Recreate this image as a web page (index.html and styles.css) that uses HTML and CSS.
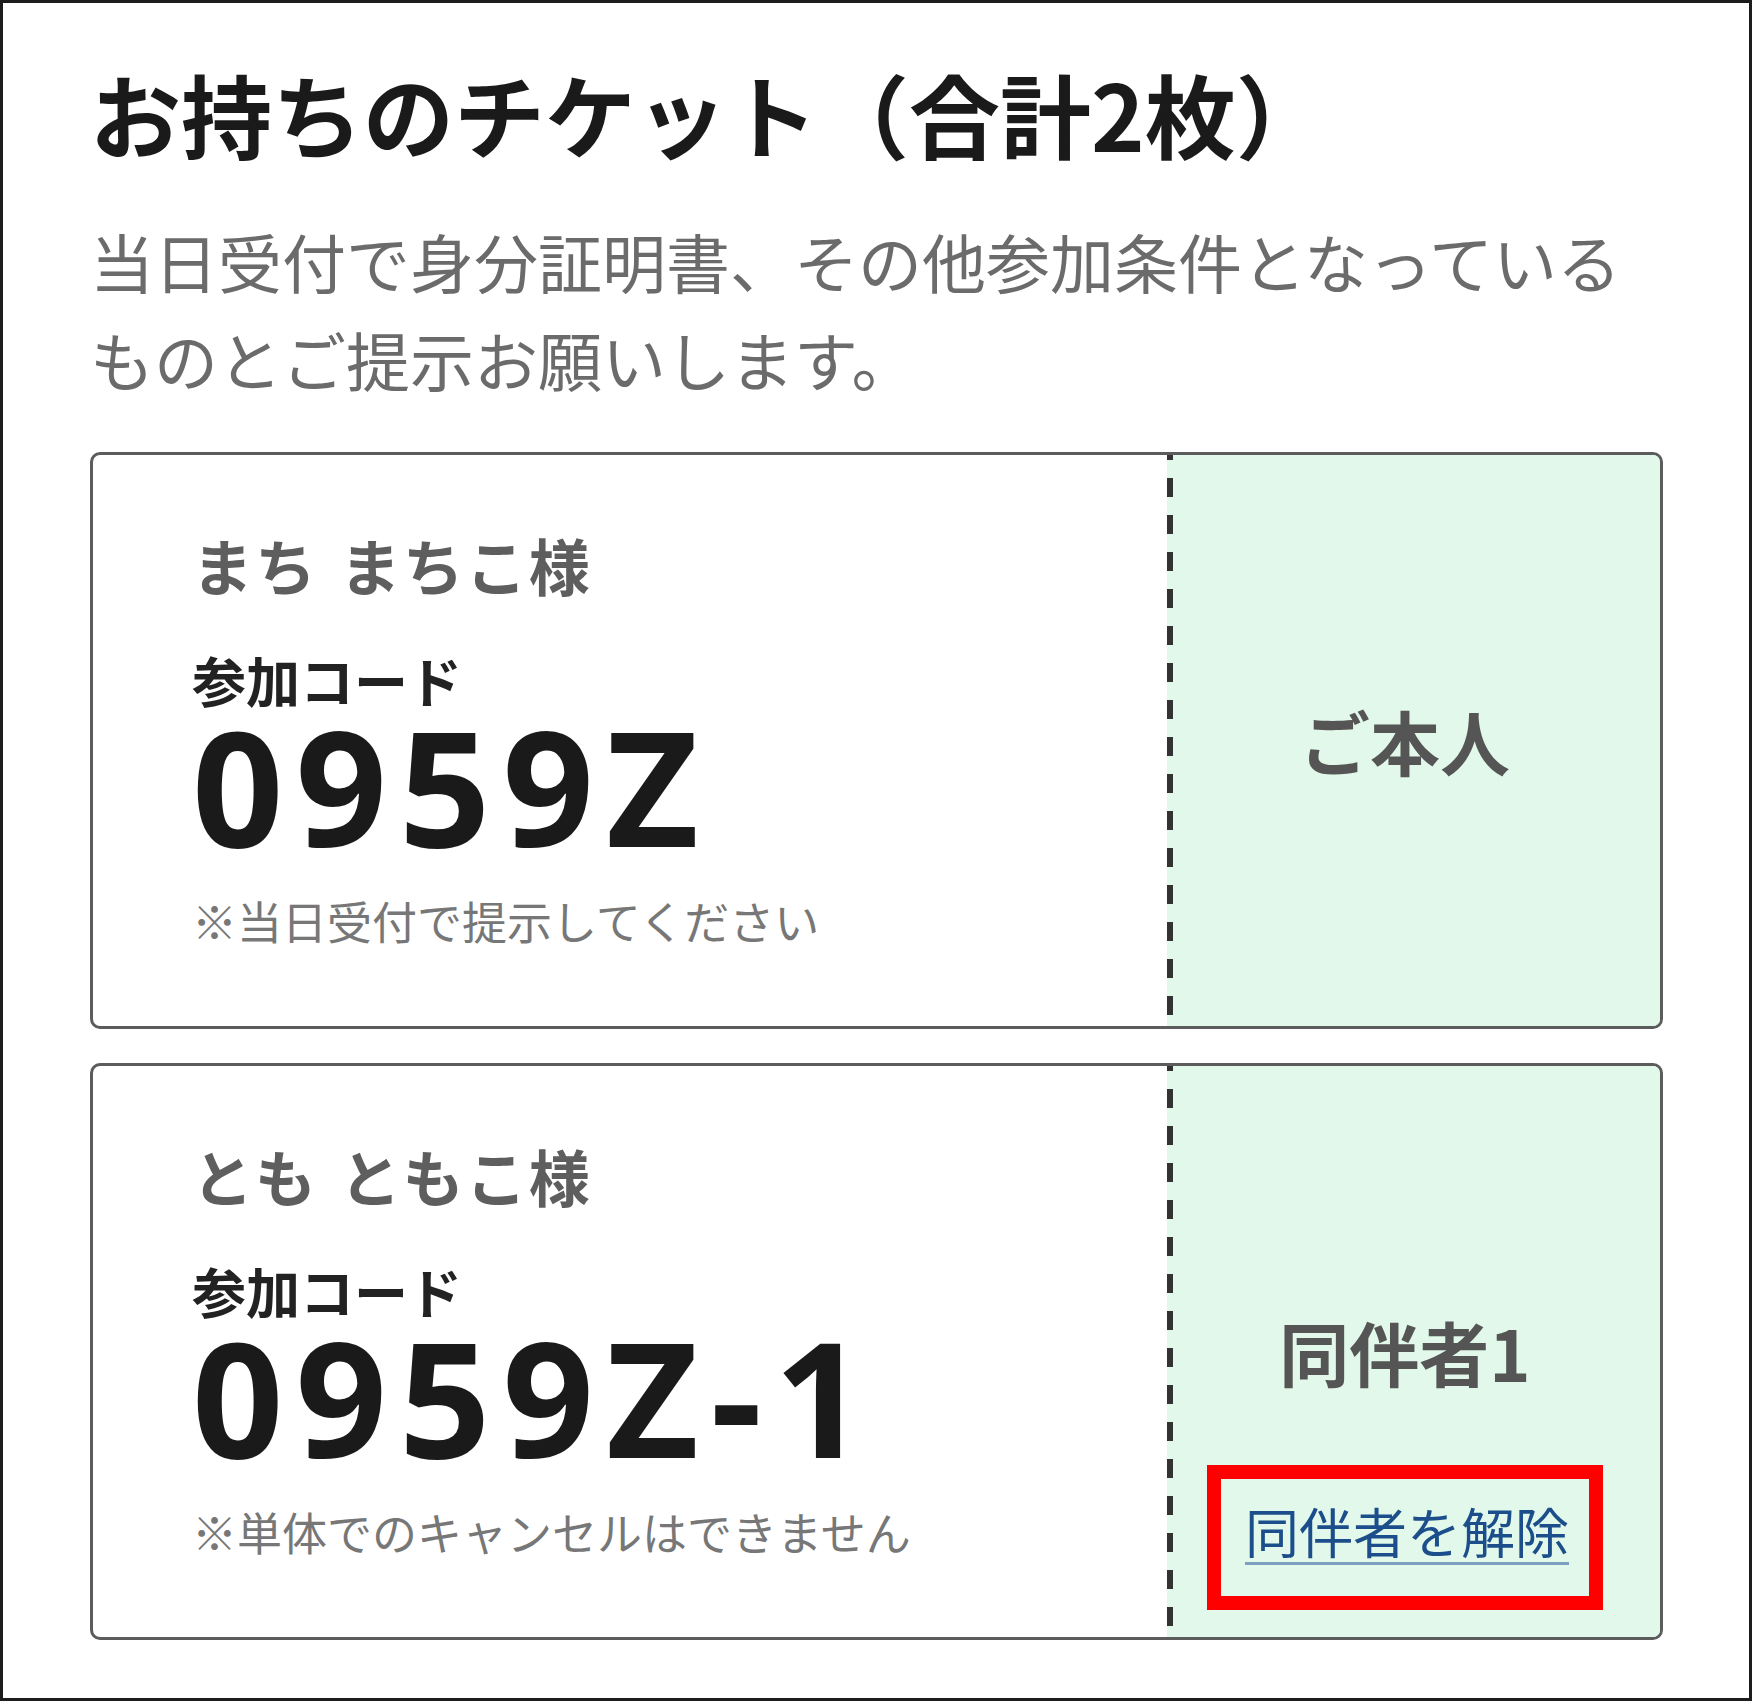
FILE: index.html
```html
<!DOCTYPE html>
<html lang="ja">
<head>
<meta charset="utf-8">
<title>お持ちのチケット</title>
<link rel="stylesheet" href="styles.css">
</head>
<body>
<main class="panel">
  <h1 class="panel-title">お持ちのチケット（合計2枚）</h1>
  <p class="panel-lead">当日受付で身分証明書、その他参加条件となっているものとご提示お願いします。</p>

  <div class="ticket-list">
    <section class="ticket">
      <div class="ticket-main">
        <p class="ticket-name">まち まちこ様</p>
        <p class="ticket-label">参加コード</p>
        <p class="ticket-code">0959Z</p>
        <p class="ticket-note">※当日受付で提示してください</p>
      </div>
      <div class="ticket-side">
        <p class="ticket-role">ご本人</p>
      </div>
    </section>

    <section class="ticket">
      <div class="ticket-main">
        <p class="ticket-name">とも ともこ様</p>
        <p class="ticket-label">参加コード</p>
        <p class="ticket-code">0959Z-1</p>
        <p class="ticket-note">※単体でのキャンセルはできません</p>
      </div>
      <div class="ticket-side ticket-side--companion">
        <p class="ticket-role">同伴者1</p>
        <div class="ticket-action">
          <a class="ticket-link" href="#">同伴者を解除</a>
        </div>
      </div>
    </section>
  </div>
</main>
</body>
</html>
```

FILE: styles.css
```css
* {
  box-sizing: border-box;
}

html,
body {
  margin: 0;
  padding: 0;
  background: #ffffff;
}

body {
  font-family: "Noto Sans CJK JP", "Noto Sans", sans-serif;
  color: #1a1a1a;
}

p {
  margin: 0;
}

.panel {
  min-height: 100vh;
  border: 3px solid #1c1c1c;
  padding: 51px 86px 40px 87px;
}

.panel-title {
  margin: 0;
  font-size: 91px;
  line-height: 117px;
  font-weight: 700;
  color: #1a1a1a;
}

.panel-lead {
  margin-top: 40px;
  font-size: 64px;
  line-height: 98px;
  color: #6b6b6b;
}

.ticket-list {
  margin-top: 45px;
  display: flex;
  flex-direction: column;
  gap: 34px;
}

.ticket {
  display: flex;
  border: 3px solid #5c5c5c;
  border-radius: 10px;
  overflow: hidden;
}

.ticket-main {
  flex: 1;
  padding: 70px 0 74px 99px;
}

.ticket-name {
  font-size: 61px;
  line-height: 80px;
  font-weight: 700;
  letter-spacing: 2px;
  word-spacing: 6px;
  color: #5e5e5e;
}

.ticket-label {
  margin-top: 48px;
  font-size: 54px;
  line-height: 1;
  font-weight: 700;
  color: #222222;
}

.ticket-code {
  margin-top: 2px;
  font-family: "Noto Sans", "Noto Sans CJK JP", sans-serif;
  font-size: 160px;
  line-height: 0.95;
  font-weight: 700;
  letter-spacing: 12px;
  color: #1a1a1a;
}

.ticket-note {
  margin-top: 28px;
  font-size: 45px;
  line-height: 63px;
  color: #777777;
}

/* stub of the ticket, separated by a perforation line */
.ticket-side {
  width: 493px;
  padding-right: 17px;
  display: flex;
  align-items: center;
  justify-content: center;
  background:
    linear-gradient(#333333 0 19px, transparent 19px) 0 -14px / 6px 37px repeat-y,
    #e1f8ea;
}

.ticket-role {
  font-size: 70px;
  line-height: 1.4;
  font-weight: 700;
  color: #555555;
  text-align: center;
}

.ticket-side--companion {
  display: grid;
  grid-template-rows: 1fr auto 1fr;
  justify-items: center;
}

.ticket-side--companion .ticket-role {
  grid-row: 2;
}

.ticket-action {
  grid-row: 3;
  align-self: end;
  margin-bottom: 27px;
  border: 14px solid #ff0000;
  padding: 14px 20px 27px 24px;
}

.ticket-link {
  display: block;
  font-size: 54px;
  line-height: 1.4;
  color: #1b4e8a;
  text-decoration: underline;
  text-decoration-color: #7d9fc0;
  text-decoration-thickness: 3px;
  text-underline-offset: 8px;
}
```
